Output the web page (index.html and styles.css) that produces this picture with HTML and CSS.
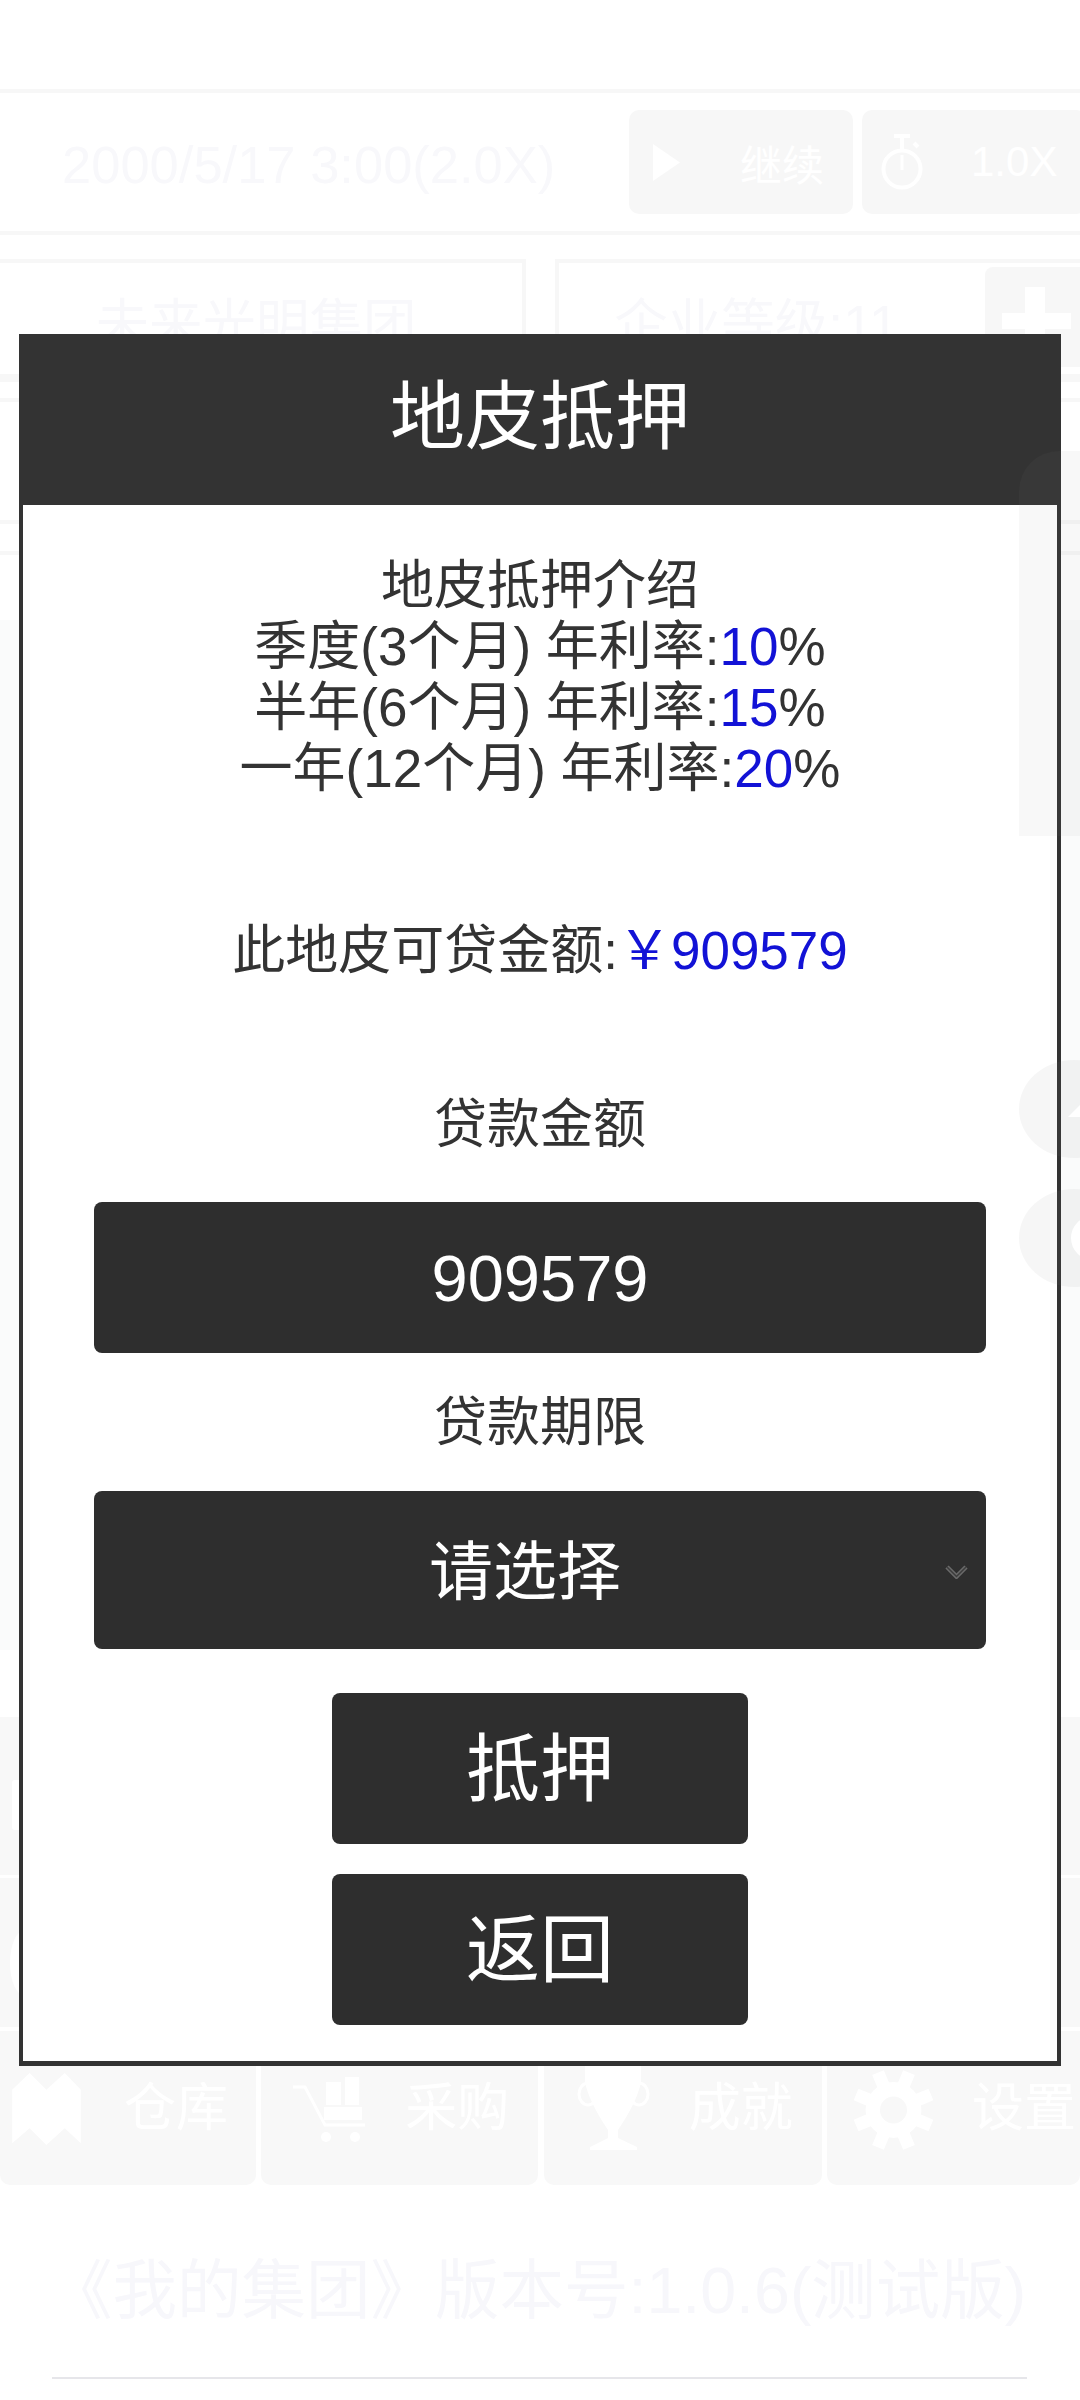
FILE: index.html
```html
<!DOCTYPE html>
<html lang="zh">
<head>
<meta charset="utf-8">
<title>地皮抵押</title>
<link rel="stylesheet" href="styles.css">
</head>
<body>
<div class="page">
  <div class="rule"></div>
  <div class="clock-row">
    <div class="clock-text">2000/5/17 3:00(2.0X)</div>
    <div class="ghost-btn play"><svg class="ic-play" viewBox="0 0 27 37"><path d="M0 0 L27 18.5 L0 37Z"/></svg><span>继续</span></div>
    <div class="ghost-btn speed"><svg class="ic-watch" viewBox="0 0 42 56"><g fill="none" stroke="#fff"><circle cx="21" cy="35" r="18.5" stroke-width="4"/><path d="M13 2h16M21 2v13M33 9l4 4" stroke-width="4"/><path d="M21 21v15" stroke-width="3"/></g></svg><span>1.0X</span></div>
  </div>
  <div class="rule"></div>
  <div class="info-row">
    <div class="info-box name">未来光明集团</div>
    <div class="info-box level">企业等级:11</div>
    <div class="plus"><i class="plus-v"></i><i class="plus-h"></i></div>
  </div>
  <div class="rule"></div>
  <div class="rule rule-b"></div>
  <div class="content">
    <div class="rule rule-c"></div>
    <div class="rule rule-d"></div>
    <div class="panel"></div>
    <div class="side-panel"></div>
    <div class="side-dot dot1"></div>
    <div class="side-dot dot2"></div>
    <div class="dot-mark mark1"></div>
    <div class="dot-mark mark2"></div>
  </div>
  <div class="grey-row"><i class="row-ic ic-a"></i></div>
  <div class="grey-row last"><i class="row-ic ic-b"></i></div>
  <nav class="tabs">
    <div class="tab t1"><svg class="tab-ic map" viewBox="0 0 205 215"><path d="M0 50 L52 0 L102 50 L157 0 L205 50 V210 L157 165 L102 215 L52 165 L0 210Z"/></svg><span>仓库</span></div>
    <div class="tab t2"><svg class="tab-ic cart" viewBox="0 0 72 65"><path d="M0 10H12L32 48H72" fill="none" stroke="#fff" stroke-width="3"/><path d="M52 0H66V28H52ZM33 5H48V28H33ZM31 30H69V43H31Z"/><circle cx="33" cy="60" r="5"/><circle cx="62" cy="60" r="5"/></svg><span>采购</span></div>
    <div class="tab t3"><svg class="tab-ic cup" viewBox="0 0 73 98"><path d="M8 0H64V30Q60 50 41 78V86L60 95V98H13V95L31 86V78Q12 50 8 30Z"/><ellipse cx="11" cy="42" rx="9" ry="11" fill="none" stroke="#fff" stroke-width="3"/><ellipse cx="62" cy="42" rx="9" ry="11" fill="none" stroke="#fff" stroke-width="3"/></svg><span>成就</span></div>
    <div class="tab t4"><svg class="tab-ic gear" viewBox="-45 -45 90 90"><circle r="31"/><g><rect x="-7" y="-45" width="14" height="20" transform="rotate(22.5)"/><rect x="-7" y="-45" width="14" height="20" transform="rotate(67.5)"/><rect x="-7" y="-45" width="14" height="20" transform="rotate(112.5)"/><rect x="-7" y="-45" width="14" height="20" transform="rotate(157.5)"/><rect x="-7" y="-45" width="14" height="20" transform="rotate(202.5)"/><rect x="-7" y="-45" width="14" height="20" transform="rotate(247.5)"/><rect x="-7" y="-45" width="14" height="20" transform="rotate(292.5)"/><rect x="-7" y="-45" width="14" height="20" transform="rotate(337.5)"/></g><circle r="15" fill="#f8f8f8"/></svg><span>设置</span></div>
  </nav>
  <div class="version">《我的集团》版本号:1.0.6(测试版)</div>
  <div class="foot-line"></div>
</div>

<section class="modal">
  <h1 class="modal-head">地皮抵押</h1>
  <div class="modal-body">
    <div class="intro">
      <div>地皮抵押介绍</div>
      <div>季度(3个月) 年利率:<b>10</b>%</div>
      <div>半年(6个月) 年利率:<b>15</b>%</div>
      <div>一年(12个月) 年利率:<b>20</b>%</div>
    </div>
    <div class="limit">此地皮可贷金额:<b>￥909579</b></div>
    <div class="label label-amount">贷款金额</div>
    <div class="field field-input">909579</div>
    <div class="label label-term">贷款期限</div>
    <div class="field field-select"><span class="select-text">请选择</span>
      <svg class="chev" viewBox="0 0 23 14"><path d="M2 2 L11.5 11.5 L21 2" fill="none" stroke="#6a6a6a" stroke-width="4.5"/><path d="M2 2 L11.5 11.5 L21 2" fill="none" stroke="#3c3c3c" stroke-width="1.5"/></svg>
    </div>
    <button class="action act1">抵押</button>
    <button class="action act2">返回</button>
  </div>
</section>
</body>
</html>
```

FILE: styles.css
```css
* { box-sizing: border-box; }
html, body { margin: 0; padding: 0; background: #fff; }
body {
  position: relative;
  width: 1080px;
  height: 2400px;
  overflow: hidden;
  font-family: "Liberation Sans", "Noto Sans CJK SC", sans-serif;
}

/* Faded page behind the dialog */
.page { padding-top: 89px; height: 2400px; color: #f8f8fb; }
.page svg { fill: #fff; }
.rule { height: 4px; background: #f7f7f7; }
.clock-row { display: flex; align-items: center; height: 138px; }
.clock-text { flex: none; width: 629px; padding: 4px 0 0 62px; font-size: 52.5px; white-space: nowrap; }
.ghost-btn {
  flex: none; display: flex; align-items: center;
  width: 224px; height: 104px; margin-right: 9px;
  background: #f7f7f7; border-radius: 10px; color: #fff; font-size: 42px;
}
.play { padding-left: 24px; gap: 60px; }
.speed { padding-left: 19px; gap: 48px; }
.ic-play { width: 27px; height: 37px; flex: none; }
.ic-watch { width: 42px; height: 56px; flex: none; }
.info-row { display: flex; gap: 29px; padding-top: 24px; height: 143px; position: relative; }
.info-box {
  flex: none; height: 119px; border: 4px solid #f7f7f7; font-size: 53.5px;
  color: #f8f8fb; text-align: center; line-height: 124px; white-space: nowrap;
}
.name { width: 526px; border-left: 0; padding-right: 10px; }
.level { width: 525px; padding-right: 126px; border-right: 0; }
.plus { position: absolute; left: 985px; top: 32px; width: 95px; height: 100px; background: #f7f7f7; border-radius: 8px 0 0 8px; }
.plus-v { position: absolute; left: 40px; top: 20px; width: 20px; height: 70px; background: #fff; }
.plus-h { position: absolute; left: 17px; top: 46px; width: 69px; height: 16px; background: #fff; }
.rule-b { margin-top: 16px; }
.content { position: relative; height: 1315px; padding-top: 118px; }
.rule-d { margin-top: 27px; }
.panel { height: 1030px; margin-top: 65px; background: #fafbfb; }
.side-panel {
  position: absolute; left: 1019px; top: 49px; width: 61px; height: 385px; z-index: 2;
  background: rgba(128, 128, 128, .06); border-radius: 40px 0 0 0;
}
.side-dot {
  position: absolute; left: 1019px; width: 110px; height: 98px; z-index: 2;
  border-radius: 50%; background: rgba(128, 128, 128, .07);
}
.dot1 { top: 658px; }
.dot2 { top: 787px; }
.dot-mark { position: absolute; z-index: 3; background: #fff; }
.mark1 { left: 1068px; top: 703px; width: 12px; height: 12px; clip-path: polygon(100% 0, 100% 100%, 0 100%); }
.mark2 { left: 1071px; top: 814px; width: 44px; height: 44px; border-radius: 50%; }
.grey-row { height: 158px; margin-bottom: 3px; background: #f8f8f8; position: relative; overflow: hidden; }
.grey-row.last { height: 149px; margin-bottom: 4px; }
.row-ic { position: absolute; background: #fff; }
.ic-a { left: 12px; top: 63px; width: 12px; height: 50px; border-radius: 3px; }
.ic-b { left: 10px; top: 52px; width: 30px; height: 66px; border-radius: 50%; }
.tabs { display: flex; justify-content: space-between; height: 154px; }
.tab {
  display: flex; align-items: flex-start; height: 154px; padding-top: 47px; gap: 42px;
  background: #f8f8f8; border-radius: 0 0 10px 10px; color: #fff; font-size: 52px; line-height: 60px; white-space: nowrap;
  overflow: hidden;
}
.t1 { width: 256px; padding-left: 11px; }
.t2 { width: 277px; padding-left: 32px; gap: 40px; }
.t3 { width: 278px; padding-left: 33px; gap: 39px; }
.t4 { width: 253px; padding-left: 26px; gap: 38px; }
.tab-ic { flex: none; }
.map { width: 71px; height: 72px; margin-top: -5px; }
.cart { width: 72px; height: 65px; margin-top: -1px; }
.cup { width: 73px; height: 98px; margin-top: -26px; }
.gear { width: 81px; height: 90px; margin-top: -13px; }
.version { margin-top: 68px; padding-left: 48px; font-size: 64.5px; line-height: 76px; white-space: nowrap; color: #f7f7fb; }
.foot-line { height: 2px; margin: 48px 53px 0 52px; background: #e6e6ea; }

/* Dialog */
.modal {
  position: absolute; left: 19px; top: 334px; width: 1042px; height: 1732px; z-index: 1;
  background: #fff; border: 4px solid #333; border-bottom-width: 5px;
  display: flex; flex-direction: column;
}
.modal-head {
  margin: -4px -4px 0; height: 171px; background: #333; color: #fff;
  font-size: 75px; font-weight: 400; line-height: 166px; text-align: center; flex: none;
}
.modal-body { display: flex; flex-direction: column; align-items: center; color: #333; }
.intro { margin-top: 50px; font-size: 53px; line-height: 61px; text-align: center; }
.intro b, .limit b { font-weight: 400; color: #1212d6; }
.limit { margin-top: 122px; font-size: 53px; line-height: 60px; }
.label { font-size: 53px; line-height: 60px; }
.label-amount { margin-top: 114px; }
.field {
  width: 892px; background: #2e2e2e; color: #fff; border-radius: 8px;
  display: flex; align-items: center; justify-content: center; position: relative;
}
.field-input { height: 151px; margin-top: 47px; padding-top: 2px; font-size: 65px; }
.label-term { margin-top: 40px; }
.field-select { height: 158px; margin-top: 38px; padding-bottom: 8px; font-size: 64px; }
.select-text { margin-right: 30px; }
.chev { position: absolute; right: 18px; top: 74px; width: 23px; height: 14px; }
.action {
  display: block; width: 416px; height: 151px; border: 0; padding: 0 0 12px; border-radius: 8px;
  background: #2e2e2e; color: #fff; font-family: inherit; font-size: 74px;
}
.act1 { margin-top: 44px; }
.act2 { margin-top: 30px; }
```
